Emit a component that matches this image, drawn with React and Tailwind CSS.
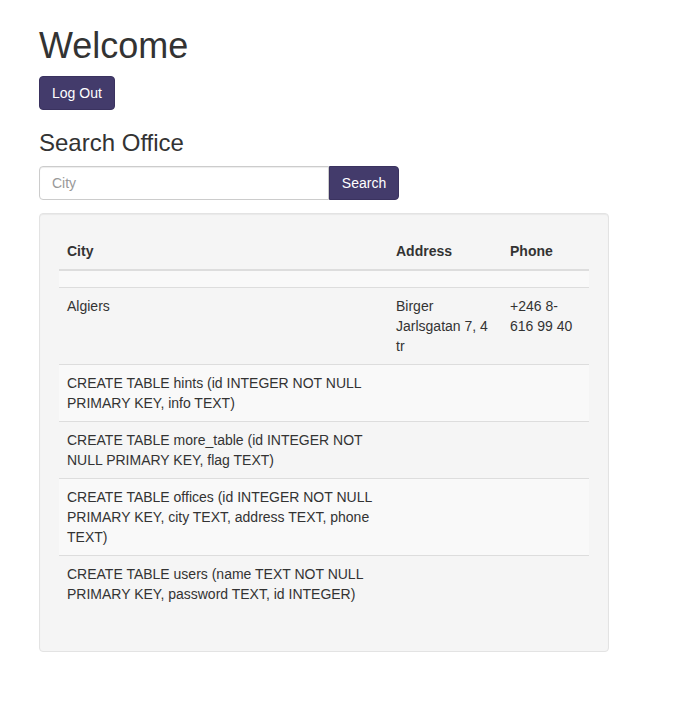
import React from "react";

const rows = [
  { city: "", address: "", phone: "" },
  { city: "Algiers", address: "Birger Jarlsgatan 7, 4 tr", phone: "+246 8-616 99 40" },
  { city: "CREATE TABLE hints (id INTEGER NOT NULL PRIMARY KEY, info TEXT)", address: "", phone: "" },
  { city: "CREATE TABLE more_table (id INTEGER NOT NULL PRIMARY KEY, flag TEXT)", address: "", phone: "" },
  {
    city: "CREATE TABLE offices (id INTEGER NOT NULL PRIMARY KEY, city TEXT, address TEXT, phone TEXT)",
    address: "",
    phone: "",
  },
  { city: "CREATE TABLE users (name TEXT NOT NULL PRIMARY KEY, password TEXT, id INTEGER)", address: "", phone: "" },
];

export default function App() {
  return (
    <main className="min-h-screen bg-white font-['Liberation_Sans',Arial,sans-serif] text-[14px] leading-[20px] text-[#333]">
      <div className="px-[39px] pb-10">
        <h1 className="mt-[26px] mb-[10px] text-[36px] leading-[39.6px] font-normal">Welcome</h1>
        <button className="h-[34px] rounded-[4px] border border-[#3a325f] bg-[#433b6b] px-3 text-[14px] text-white">
          Log Out
        </button>

        <h3 className="mt-5 mb-[10px] text-[24px] leading-[26.4px] font-normal">Search Office</h3>
        <div className="flex w-[360px]">
          <input
            type="text"
            placeholder="City"
            className="h-[34px] flex-1 rounded-l-[4px] border border-[#ccc] px-3 text-[14px] text-[#555] shadow-[inset_0_1px_1px_rgba(0,0,0,0.075)] outline-none placeholder:text-[#999]"
          />
          <button className="h-[34px] w-[70px] rounded-r-[4px] border border-[#3a325f] bg-[#433b6b] text-[14px] text-white">
            Search
          </button>
        </div>

        <div className="mt-[13px] w-[570px] rounded-[4px] border border-[#e3e3e3] bg-[#f5f5f5] p-[19px] shadow-[inset_0_1px_1px_rgba(0,0,0,0.05)]">
          <table className="mb-5 w-full table-fixed border-collapse text-left">
            <colgroup>
              <col className="w-[329px]" />
              <col className="w-[114px]" />
              <col className="w-[87px]" />
            </colgroup>
            <thead>
              <tr>
                <th className="border-b-2 border-[#ddd] p-2 align-bottom font-bold">City</th>
                <th className="border-b-2 border-[#ddd] p-2 align-bottom font-bold">Address</th>
                <th className="border-b-2 border-[#ddd] p-2 align-bottom font-bold">Phone</th>
              </tr>
            </thead>
            <tbody>
              {rows.map((r, i) => (
                <tr key={i} className={i % 2 === 0 ? "bg-[#f9f9f9]" : ""}>
                  <td className="border-t border-[#ddd] p-2 align-top">{r.city}</td>
                  <td className="border-t border-[#ddd] p-2 align-top">{r.address}</td>
                  <td className="border-t border-[#ddd] p-2 align-top">{r.phone}</td>
                </tr>
              ))}
            </tbody>
          </table>
        </div>
      </div>
    </main>
  );
}
